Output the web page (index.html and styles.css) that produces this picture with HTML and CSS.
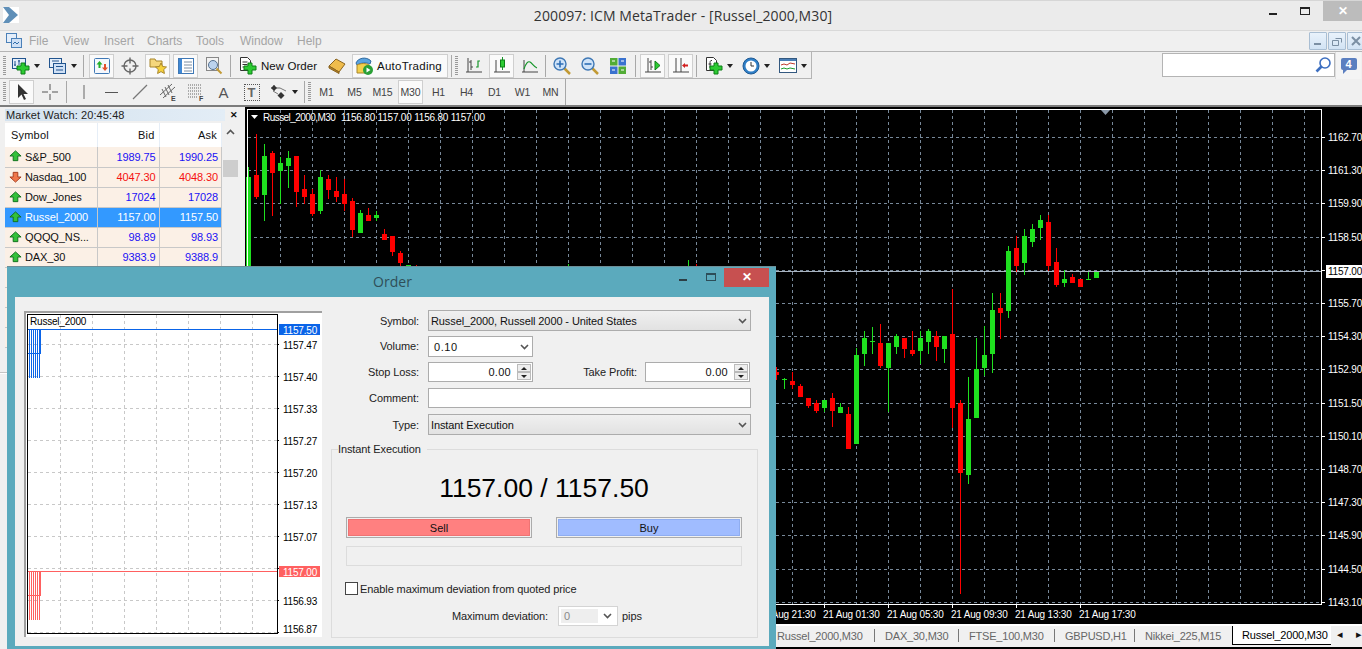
FILE: index.html
```html
<!DOCTYPE html>
<html lang="en">
<head>
	<title>200097: ICM MetaTrader - [Russel_2000,M30]</title>
	<meta charset="utf-8">
	<link rel="stylesheet" href="styles.css">
</head>

<body>
	<svg class="defs" width="0" height="0">
		<symbol id="i-plus" viewBox="0 0 18 18"><path d="M9 6h4v3h4v4h-4v4H9v-4H5V9h4z" fill="#2ccb32" stroke="#0d7f16"/></symbol>
		<symbol id="i-newchart" viewBox="0 0 18 18"><rect x=".5" y="1.5" width="13" height="10" fill="#e4eefa" stroke="#22558f"/><path d="M3 4v5M2 8h2M7 3v5M6 4h2" stroke="#22558f" fill="none"/><use href="#i-plus"/></symbol>
		<symbol id="i-profiles" viewBox="0 0 18 18"><rect x=".5" y="1.5" width="12" height="9" fill="#e4eefa" stroke="#22558f"/><rect x="4.5" y="6.5" width="12" height="10" fill="#cfe0f5" stroke="#22558f"/><path d="M3 4h7M7 9.500h7M7 13h7" stroke="#22558f"/></symbol>
		<symbol id="i-market" viewBox="0 0 18 18"><rect x="1.500" y="1.500" width="15" height="15" rx="1" fill="#f4f8fd" stroke="#3f78b5"/><path d="M6.500 4l3 3.500h-2V11h-2V7.500h-2z" fill="#22b02a"/><path d="M11 7h2v3.500h2l-3 3.500-3-3.500h2z" fill="#e2502a"/></symbol>
		<symbol id="i-cross" viewBox="0 0 18 18"><circle cx="9" cy="9" r="6" fill="none" stroke="#666" stroke-width="1.400"/><path d="M9 .5v6M9 11.500v6M.5 9h6M11.500 9h6" stroke="#666" stroke-width="1.400"/></symbol>
		<symbol id="i-navigator" viewBox="0 0 18 18"><path d="M1 2h5l1 2h6v6H1z" fill="#f5d77c" stroke="#a8862c"/><path d="M12 6l1.700 3.500 3.800.5-2.800 2.600.7 3.900-3.400-1.900-3.400 1.900.7-3.900L6.500 10l3.800-.5z" fill="#f6d23c" stroke="#a8862c"/></symbol>
		<symbol id="i-terminal" viewBox="0 0 18 18"><rect x="1.500" y="1.500" width="15" height="15" fill="#fff" stroke="#3f78b5"/><rect x="2" y="2" width="3" height="14" fill="#3f88d5"/><path d="M7 5h8M7 8h8M7 11h8M7 14h8" stroke="#7d8da0"/></symbol>
		<symbol id="i-tester" viewBox="0 0 18 18"><rect x="1.500" y=".5" width="12" height="13" fill="#f3f3f3" stroke="#888"/><circle cx="8" cy="8" r="4.500" fill="#bcd3ee" stroke="#56718f"/><path d="M11.500 11.500l5 5" stroke="#c29a35" stroke-width="2"/></symbol>
		<symbol id="i-order" viewBox="0 0 18 18"><path d="M1.500.5h7l3 3v10h-10z" fill="#fff" stroke="#333"/><path d="M3.500 5h5M3.500 7.500h5M3.500 10h3" stroke="#333"/><use href="#i-plus"/></symbol>
		<symbol id="i-editor" viewBox="0 0 18 18"><path d="M1 9l7-7 9 5-6 8z" fill="#efbc4c" stroke="#8a6420"/><path d="M1 9l10 6v1.500L1 11z" fill="#b98425" stroke="#8a6420"/></symbol>
		<symbol id="i-auto" viewBox="0 0 18 18"><path d="M1 6c2-5 10-7 15-2l-1 3c-4-2-9-1-13 1z" fill="#5aa3e0" stroke="#336b9e"/><path d="M2 8c4-2 9-2 12 0v8H2z" fill="#f3cf4c" stroke="#a8862c"/><circle cx="13" cy="13" r="5" fill="#2aa036"/><path d="M11.500 10.500l4 2.500-4 2.500z" fill="#fff"/></symbol>
		<symbol id="i-bars" viewBox="0 0 18 18"><path d="M3 1v14M1 15h16M6 3v10M4 5h2M6 10h2" stroke="#444" fill="none"/><path d="M11 10h2V4h2" stroke="#16962a" fill="none" stroke-width="1.200"/></symbol>
		<symbol id="i-candle" viewBox="0 0 18 18"><path d="M3 3v12M1 15h16" stroke="#444" fill="none"/><path d="M9.500 0v13" stroke="#16962a"/><rect x="7.500" y="3" width="4" height="7" fill="#2ccb32" stroke="#0d7f16"/></symbol>
		<symbol id="i-line" viewBox="0 0 18 18"><path d="M3 3v12M1 15h16" stroke="#444" fill="none"/><path d="M3 12c2-6 4-8 6-7s4 5 7 6" stroke="#16962a" fill="none" stroke-width="1.200"/></symbol>
		<symbol id="i-zoomin" viewBox="0 0 18 18"><path d="M11 11l6 6" stroke="#c29a35" stroke-width="2.500"/><circle cx="7" cy="7" r="6" fill="#cfe3f8" stroke="#3f78b5" stroke-width="1.400"/><path d="M7 3.500v7M3.500 7h7" stroke="#2d6eb5" stroke-width="1.600"/></symbol>
		<symbol id="i-zoomout" viewBox="0 0 18 18"><path d="M11 11l6 6" stroke="#c29a35" stroke-width="2.500"/><circle cx="7" cy="7" r="6" fill="#cfe3f8" stroke="#3f78b5" stroke-width="1.400"/><path d="M3.500 7h7" stroke="#2d6eb5" stroke-width="1.600"/></symbol>
		<symbol id="i-tile" viewBox="0 0 18 18"><rect x="1" y="1" width="7.500" height="7.500" fill="#52ac36"/><rect x="9.500" y="1" width="7.500" height="7.500" fill="#3a72cf"/><rect x="1" y="9.500" width="7.500" height="7.500" fill="#3a72cf"/><rect x="9.500" y="9.500" width="7.500" height="7.500" fill="#52ac36"/><path d="M3 4h3M12 4h3M3 13h3M12 13h3" stroke="#fff"/></symbol>
		<symbol id="i-shift" viewBox="0 0 18 18"><path d="M4 1v14M1 15h16M7 3v10M5 5h2M7 10h2" stroke="#444" fill="none"/><path d="M11 4l5 4.500-5 4.500z" fill="#2ccb32" stroke="#0d7f16"/></symbol>
		<symbol id="i-scroll" viewBox="0 0 18 18"><path d="M4 1v14M1 15h16M9 1v14" stroke="#444" fill="none"/><path d="M16 6v1.500h-3V6l-3 2.500 3 2.500V9.500h3z" fill="#d21f1f"/></symbol>
		<symbol id="i-indicator" viewBox="0 0 18 18"><path d="M1.500.5h7l3 3v10h-10z" fill="#fff" stroke="#333"/><path d="M7 3.500C5 3 5 5 5 7v4M3.500 7h3" stroke="#333" fill="none"/><use href="#i-plus"/></symbol>
		<symbol id="i-clock" viewBox="0 0 18 18"><circle cx="9" cy="9" r="8" fill="#2f7fc7" stroke="#1f5a94"/><circle cx="9" cy="9" r="5.500" fill="#fff"/><path d="M9 5v4h3" stroke="#333" fill="none"/></symbol>
		<symbol id="i-template" viewBox="0 0 18 18"><rect x=".5" y="1.500" width="17" height="14" fill="#fff" stroke="#33587f"/><rect x="1" y="2" width="16" height="2" fill="#4a7eb6"/><path d="M2 8l3-1 3 1 3-2 5 1" stroke="#c0392b" fill="none"/><path d="M2 12l3-1 3 1 3-1 5 1" stroke="#1b9a2c" fill="none"/></symbol>
		<symbol id="i-up" viewBox="0 0 14 12"><path d="M7 .5l6 5.500H9.500v5h-5V6H1z" fill="#34c13a" stroke="#0e6d1b"/></symbol>
		<symbol id="i-down" viewBox="0 0 14 12"><path d="M7 11.500L1 6h3.500V1h5v5H13z" fill="#f0764a" stroke="#a2381a"/></symbol>
		<symbol id="i-chevron" viewBox="0 0 9 6"><path d="M1 1l3.500 3.500L8 1" fill="none" stroke="#555" stroke-width="1.600"/></symbol>
	</svg>

	<div class="app">
		<div class="titlebar">
			<svg class="logo" width="16" height="16" viewBox="0 0 16 16"><rect width="16" height="16" fill="#fff"/><path d="M0 0h6l9 8-9 8H0l6-8z" fill="#5f8fb8"/></svg>
			<div class="title">200097: ICM MetaTrader - [Russel_2000,M30]</div>
			<div class="win-btns">
				<span class="win-min"></span>
				<span class="win-max"></span>
				<span class="win-close">✕</span>
			</div>
		</div>

		<div class="menubar">
			<svg class="menu-icon" width="16" height="16" viewBox="0 0 16 16"><rect x=".5" y=".5" width="10" height="9" fill="#e4eefa" stroke="#4b80b8"/><rect x="5.500" y="5.500" width="10" height="9" fill="#cfe0f5" stroke="#4b80b8"/><path d="M7 11l2-2 2 2 2-2" fill="none" stroke="#2f6ca8"/></svg>
			<span class="menu-item">File</span>
			<span class="menu-item">View</span>
			<span class="menu-item">Insert</span>
			<span class="menu-item">Charts</span>
			<span class="menu-item">Tools</span>
			<span class="menu-item">Window</span>
			<span class="menu-item">Help</span>
			<div class="mdi-btns">
				<span class="mdi-btn"><svg width="10" height="10"><path d="M1 8h7" stroke="#7b8fa3" stroke-width="2"/></svg></span>
				<span class="mdi-btn"><svg width="10" height="10"><path d="M3.500 2.500h6v4M.5 4.500h6v5h-6z" fill="none" stroke="#7b8fa3"/></svg></span>
				<span class="mdi-btn"><svg width="10" height="10"><path d="M1 1l8 8M9 1L1 9" stroke="#7b8fa3" stroke-width="2"/></svg></span>
			</div>
		</div>

		<div class="toolrow">
			<div class="toolbar toolbar-main">
				<span class="grip"></span>
				<span class="drop"><svg class="ico"><use href="#i-newchart"/></svg><i class="caret"></i></span>
				<span class="drop"><svg class="ico"><use href="#i-profiles"/></svg><i class="caret"></i></span>
				<span class="sep sep-a"></span>
				<span class="tool on"><svg class="ico"><use href="#i-market"/></svg></span>
				<span class="tool"><svg class="ico"><use href="#i-cross"/></svg></span>
				<span class="tool on"><svg class="ico"><use href="#i-navigator"/></svg></span>
				<span class="tool on"><svg class="ico"><use href="#i-terminal"/></svg></span>
				<span class="tool"><svg class="ico"><use href="#i-tester"/></svg></span>
				<span class="sep sep-b"></span>
				<span class="tool-text new-order"><svg class="ico"><use href="#i-order"/></svg>New Order</span>
				<span class="tool"><svg class="ico"><use href="#i-editor"/></svg></span>
				<span class="tool-text auto on"><svg class="ico"><use href="#i-auto"/></svg>AutoTrading</span>
				<span class="sep sep-c"></span>
				<span class="grip"></span>
				<span class="tool"><svg class="ico"><use href="#i-bars"/></svg></span>
				<span class="tool on"><svg class="ico"><use href="#i-candle"/></svg></span>
				<span class="tool"><svg class="ico"><use href="#i-line"/></svg></span>
				<span class="sep sep-c"></span>
				<span class="tool"><svg class="ico"><use href="#i-zoomin"/></svg></span>
				<span class="tool"><svg class="ico"><use href="#i-zoomout"/></svg></span>
				<span class="tool"><svg class="ico"><use href="#i-tile"/></svg></span>
				<span class="sep sep-d"></span>
				<span class="tool on"><svg class="ico"><use href="#i-shift"/></svg></span>
				<span class="tool on"><svg class="ico"><use href="#i-scroll"/></svg></span>
				<span class="sep sep-a"></span>
				<span class="drop"><svg class="ico"><use href="#i-indicator"/></svg><i class="caret"></i></span>
				<span class="drop"><svg class="ico"><use href="#i-clock"/></svg><i class="caret"></i></span>
				<span class="drop"><svg class="ico"><use href="#i-template"/></svg><i class="caret"></i></span>
			</div>
			<div class="search">
				<svg width="18" height="18" viewBox="0 0 18 18"><circle cx="11" cy="7" r="5" fill="#fff" stroke="#3d6fc0" stroke-width="1.600"/><path d="M7.500 10.500L2.500 15.500" stroke="#3d6fc0" stroke-width="2.600"/></svg>
			</div>
			<div class="notify">
				<span class="notify-bubble">4</span>
			</div>
		</div>

		<div class="toolbar toolbar-draw">
			<span class="grip"></span>
			<span class="tool on"><svg class="ico" viewBox="0 0 18 18"><path d="M5 1v14l3.500-3.500 2.500 5.500 2-1-2.500-5H15z" fill="#333"/></svg></span>
			<span class="tool"><svg class="ico" viewBox="0 0 18 18"><path d="M9 1v6M9 11v6M1 9h6M11 9h6" stroke="#555"/></svg></span>
			<span class="sep sep-e"></span>
			<span class="tool"><svg class="ico" viewBox="0 0 18 18"><path d="M9 2v14" stroke="#666"/></svg></span>
			<span class="tool"><svg class="ico" viewBox="0 0 18 18"><path d="M2 9.500h13" stroke="#555"/></svg></span>
			<span class="tool"><svg class="ico" viewBox="0 0 18 18"><path d="M2 16L16 2" stroke="#777" stroke-width="1.200"/></svg></span>
			<span class="tool"><svg class="ico" viewBox="0 0 18 18"><path d="M1 12L13 1M4 15L16 4M3 6l4 8M6 4l4 8M9 2l4 8" stroke="#666" fill="none"/><text x="12" y="18" class="ico-letter">E</text></svg></span>
			<span class="tool"><svg class="ico" viewBox="0 0 18 18"><path d="M1 2h13M1 5h13M1 8h13M1 11h13M1 14h10" stroke="#666" stroke-dasharray="1 1"/><text x="12" y="18" class="ico-letter">F</text></svg></span>
			<span class="tool tool-a">A</span>
			<span class="tool tool-t">T</span>
			<span class="drop drop-draw"><svg class="ico" viewBox="0 0 18 18"><path d="M1 5h9M4 2v6" stroke="#666"/><path d="M4 2l3 3-3 3-3-3z" fill="#333"/><path d="M11 9l3.500 3.500L11 16l-3.500-3.500z" fill="#333"/><path d="M3 8l5 3M10 5l6 3" stroke="#777"/></svg><i class="caret"></i></span>
			<span class="sep sep-f"></span>
			<span class="grip"></span>
			<span class="tool period">M1</span>
			<span class="tool period">M5</span>
			<span class="tool period">M15</span>
			<span class="tool period on">M30</span>
			<span class="tool period">H1</span>
			<span class="tool period">H4</span>
			<span class="tool period">D1</span>
			<span class="tool period">W1</span>
			<span class="tool period">MN</span>
			<span class="sep sep-g"></span>
		</div>

		<div class="workspace">
			<div class="side">
				<div class="watch">
					<div class="panel-head">
						<span class="panel-title">Market Watch: 20:45:48</span>
						<span class="panel-close">✕</span>
					</div>
					<div class="watch-body">
						<table class="quotes">
							<thead>
								<tr><th class="sym">Symbol</th><th>Bid</th><th>Ask</th></tr>
							</thead>
							<tbody>
								<tr><td class="sym"><svg class="arrow"><use href="#i-up"/></svg>S&amp;P_500</td><td class="b">1989.75</td><td class="b">1990.25</td></tr>
								<tr><td class="sym"><svg class="arrow"><use href="#i-down"/></svg>Nasdaq_100</td><td class="r">4047.30</td><td class="r">4048.30</td></tr>
								<tr><td class="sym"><svg class="arrow"><use href="#i-up"/></svg>Dow_Jones</td><td class="b">17024</td><td class="b">17028</td></tr>
								<tr class="sel"><td class="sym"><svg class="arrow"><use href="#i-up"/></svg>Russel_2000</td><td>1157.00</td><td>1157.50</td></tr>
								<tr><td class="sym"><svg class="arrow"><use href="#i-up"/></svg>QQQQ_NS...</td><td class="b">98.89</td><td class="b">98.93</td></tr>
								<tr><td class="sym"><svg class="arrow"><use href="#i-up"/></svg>DAX_30</td><td class="b">9383.9</td><td class="b">9388.9</td></tr>
								<tr><td class="sym"></td><td></td><td></td></tr>
								<tr><td class="sym"></td><td></td><td></td></tr>
								<tr><td class="sym"></td><td></td><td></td></tr>
								<tr><td class="sym"></td><td></td><td></td></tr>
							</tbody>
						</table>
						<div class="scroll">
							<svg width="9" height="6"><use href="#i-chevron" transform="rotate(180 4.500 3)"/></svg>
							<span class="scroll-thumb"></span>
						</div>
					</div>
				</div>
				<div class="navigator"></div>
			</div>

			<div class="chart-wrap">
				<svg id="chart" class="chart" width="1117" height="517" viewBox="245 107 1117 517"></svg>
				<div class="tabs">
					<span class="tab tab-first">Russel_2000,M30</span>
					<span class="tab">DAX_30,M30</span>
					<span class="tab">FTSE_100,M30</span>
					<span class="tab">GBPUSD,H1</span>
					<span class="tab tab-last">Nikkei_225,M15</span>
					<span class="tab active">Russel_2000,M30</span>
					<span class="tab-arrows"><i>◂</i><i>▸</i></span>
				</div>
			</div>
		</div>
	</div>

	<div class="dialog">
		<div class="dialog-head">
			<span></span>
			<span class="dialog-title">Order</span>
			<div class="dialog-btns">
				<span class="dlg-min"></span>
				<span class="dlg-max"></span>
				<span class="dlg-close">✕</span>
			</div>
		</div>
		<div class="dialog-body">
			<svg id="tick" class="tick" width="298" height="326" viewBox="24 311 298 326"></svg>
			<div class="order">
				<div class="row row-symbol">
					<label>Symbol:</label>
					<div class="combo wide">Russel_2000, Russell 2000 - United States<svg class="chev"><use href="#i-chevron"/></svg></div>
				</div>
				<div class="row row-volume">
					<label>Volume:</label>
					<div class="combo white short">0.10<svg class="chev"><use href="#i-chevron"/></svg></div>
				</div>
				<div class="row row-stops">
					<label>Stop Loss:</label>
					<div class="spin short"><span class="spin-val">0.00</span><span class="spin-btns"><i class="up"></i><i class="dn"></i></span></div>
					<label class="label-tp">Take Profit:</label>
					<div class="spin short"><span class="spin-val">0.00</span><span class="spin-btns"><i class="up"></i><i class="dn"></i></span></div>
				</div>
				<div class="row row-comment">
					<label>Comment:</label>
					<div class="field wide"></div>
				</div>
				<div class="row row-type">
					<label>Type:</label>
					<div class="combo wide">Instant Execution<svg class="chev"><use href="#i-chevron"/></svg></div>
				</div>
				<fieldset class="exec">
					<legend>Instant Execution</legend>
					<div class="price">1157.00 / 1157.50</div>
					<div class="deal">
						<button class="deal-btn sell">Sell</button>
						<button class="deal-btn buy">Buy</button>
					</div>
					<div class="progress"></div>
					<div class="check"><span class="check-box"></span>Enable maximum deviation from quoted price</div>
					<div class="deviation">
						<span>Maximum deviation:</span>
						<div class="dev-combo"><span class="dev-val">0</span><svg class="chev"><use href="#i-chevron"/></svg></div>
						<span>pips</span>
					</div>
				</fieldset>
			</div>
		</div>
	</div>

	<script src="chart.js"></script>
</body>

</html>
```

FILE: styles.css
```css
* {
	box-sizing: border-box;
}

html, body {
	margin: 0;
	padding: 0;
	height: 649px;
	overflow: hidden;
}

body {
	position: relative;
	background: #f0f0f0;
	color: #111;
	font-family: "Liberation Sans", Arial, sans-serif;
	font-size: 11px;
	letter-spacing: -.1px;
}

.defs {
	position: absolute;
}

.app {
	display: flex;
	flex-direction: column;
	height: 649px;
}

/* window title */
.titlebar {
	display: grid;
	grid-template-columns: 1fr auto 1fr;
	align-items: center;
	height: 31px;
	flex: none;
	background: #ebebeb;
	border-top: 1px solid #d6d6d6;
	border-bottom: 1px solid #d9d9d9;
}

.logo {
	margin: -2px 0 0 3px;
}

.title {
	font-family: "Open Sans", sans-serif;
	font-size: 14px;
	color: #333;
	letter-spacing: .1px;
	margin: -1px 0 0 4px;
}

.win-btns {
	display: flex;
	justify-content: flex-end;
	align-self: start;
	align-items: flex-start;
}

.win-min {
	width: 8px;
	height: 2px;
	margin: 12px 23px 0 0;
	background: #222;
}

.win-max {
	width: 10px;
	height: 8px;
	margin: 6px 13px 0 0;
	border: 1px solid #222;
	border-top-width: 2px;
}

.win-close {
	width: 39px;
	height: 20px;
	background: #bcbcbc;
	color: #fff;
	font-size: 12px;
	font-weight: bold;
	line-height: 20px;
	text-align: center;
}

/* menu */
.menubar {
	display: flex;
	align-items: center;
	height: 21px;
	flex: none;
	padding-left: 6px;
	background: #f0f0f0;
	border-bottom: 1px solid #b4b4b4;
	color: #a5a5a5;
	font-size: 12px;
	letter-spacing: 0;
}

.menu-icon {
	margin-right: 7px;
}

.menu-item {
	margin-right: 20px;
}

.menu-item:nth-of-type(1) { width: 14px; }
.menu-item:nth-of-type(2) { width: 21px; }
.menu-item:nth-of-type(3) { width: 23px; }
.menu-item:nth-of-type(4) { width: 29px; }
.menu-item:nth-of-type(5) { width: 24px; }
.menu-item:nth-of-type(6) { width: 37px; }

.mdi-btns {
	display: flex;
	gap: 1px;
	margin-left: auto;
	align-self: flex-start;
	margin-top: 1px;
	margin-right: -3px;
}

.mdi-btn {
	display: flex;
	align-items: center;
	justify-content: center;
	width: 18px;
	height: 18px;
	background: linear-gradient(#e9f2fb, #d2e3f4);
	border: 1px solid #a9bed3;
	border-radius: 1px;
}

/* toolbars */
.toolrow {
	display: flex;
	height: 27px;
	flex: none;
}

.toolbar {
	display: flex;
	align-items: center;
	gap: 3px;
	padding-left: 3px;
}

.toolbar-main {
	width: 812px;
	padding-top: 2px;
	border-right: 1px solid #b4b4b4;
	border-bottom: 1px solid #b4b4b4;
}

.toolbar-draw {
	height: 26px;
	flex: none;
}

.grip {
	width: 3px;
	height: 20px;
	background: repeating-linear-gradient(#9a9a9a 0 1px, #f0f0f0 1px 2px);
}

.sep {
	width: 1px;
	height: 22px;
	background: #a8a8a8;
}

.sep-a { margin-right: 2px; }
.sep-b { margin: 0 1px 0 1px; }
.sep-c { margin-left: 0; }
.sep-d { margin: 0 1px 0 2px; }
.sep-e { margin: 0 1px; }
.sep-g { margin-left: -1px; height: 26px; }

.tool {
	display: flex;
	align-items: center;
	justify-content: center;
	width: 25px;
	height: 24px;
	color: #555;
}

.tool-text {
	display: flex;
	align-items: center;
	gap: 4px;
	height: 24px;
	color: #111;
	font-size: 11.500px;
	letter-spacing: .25px;
	white-space: nowrap;
}

.on {
	background: #fafafa;
	border: 1px solid #cfcfcf;
}

.new-order {
	width: 86px;
	padding-left: 4px;
	letter-spacing: .05px;
}

.auto {
	width: 96px;
	padding-left: 2px;
}

.ico {
	width: 18px;
	height: 18px;
	flex: none;
}

.ico-letter {
	font-size: 7px;
	font-weight: bold;
	fill: #444;
}

.drop {
	display: flex;
	align-items: center;
	gap: 4px;
	width: 34px;
	height: 24px;
	padding-left: 3px;
}

.caret {
	width: 0;
	height: 0;
	border: 3.500px solid transparent;
	border-top: 4px solid #222;
	border-bottom: 0;
}

.tool-a {
	font-size: 15px;
	color: #555;
}

.tool-t {
	font-size: 13px;
	font-weight: bold;
	color: #666;
}

.tool-t::before {
	content: "";
	position: absolute;
	width: 14px;
	height: 15px;
	border: 1px dotted #555;
}

.period {
	font-size: 10.500px;
	color: #444;
}

.search {
	display: flex;
	align-items: center;
	justify-content: flex-end;
	width: 173px;
	height: 24px;
	margin: 1px 0 0 350px;
	padding-right: 2px;
	background: #fff;
	border: 1px solid #b4b4b4;
}

.notify {
	display: flex;
	align-items: flex-start;
	justify-content: center;
	width: 26px;
	padding-top: 6px;
	background: #f4f4f4;
	border-left: 1px solid #ddd;
}

.notify-bubble {
	position: relative;
	width: 16px;
	height: 12px;
	background: #5b7fc0;
	border-radius: 2px;
	color: #fff;
	font-size: 11px;
	font-weight: bold;
	line-height: 12px;
	text-align: center;
}

.notify-bubble::after {
	content: "";
	position: absolute;
	left: 2px;
	top: 12px;
	border-top: 4px solid #5b7fc0;
	border-right: 4px solid transparent;
}

/* main area */
.workspace {
	display: flex;
	flex: 1;
	min-height: 0;
	border-top: 2px solid #7c7c7c;
}

.side {
	width: 245px;
	flex: none;
	background: #f0f0f0;
}

.watch {
	height: 266px;
	padding: 2px 0 0 5px;
	border-bottom: 1px solid #c4c4c4;
	overflow: hidden;
}

.panel-head {
	display: flex;
	align-items: center;
	height: 12px;
	margin-bottom: 2px;
}

.panel-title {
	flex: none;
	width: 220px;
	height: 12px;
	padding-left: 1px;
	background: linear-gradient(90deg, #d3e2ef, #e3edf6);
	color: #222;
	line-height: 12px;
	letter-spacing: .1px;
}

.panel-close {
	width: 18px;
	text-align: center;
	font-size: 9px;
	font-weight: bold;
}

.watch-body {
	display: flex;
}

.quotes {
	width: 217px;
	flex: none;
	table-layout: fixed;
	border-collapse: collapse;
}

.quotes th {
	height: 24px;
	padding: 0 4px 0 0;
	background: #fff;
	border-right: 1px solid #e6eef7;
	font-weight: normal;
	text-align: right;
	letter-spacing: .2px;
}

.quotes th.sym {
	width: 92px;
	padding-left: 6px;
	text-align: left;
}

.quotes th:nth-child(2) {
	width: 62px;
}

.quotes td {
	height: 20px;
	padding: 0 3px 0 0;
	background: #fbf0e6;
	border-right: 1px solid #c8c8c8;
	border-bottom: 1px solid #c8c8c8;
	text-align: right;
	white-space: nowrap;
	overflow: hidden;
}

.quotes td.sym {
	padding: 0 0 0 20px;
	text-align: left;
	position: relative;
}

.arrow {
	position: absolute;
	left: 4px;
	top: 3px;
	width: 13px;
	height: 12px;
}

.b {
	color: #1a10f5;
}

.r {
	color: #f51010;
}

.quotes tr.sel td {
	background: #3399ff;
	color: #fff;
}

.scroll {
	display: flex;
	flex-direction: column;
	align-items: center;
	width: 15px;
	margin-left: 1px;
	padding-top: 6px;
}

.scroll-thumb {
	width: 15px;
	height: 17px;
	margin-top: 25px;
	background: #cdcdcd;
}

.navigator {
	height: 276px;
	background: #f0f0f0;
	border-top: 1px solid #fff;
}

.chart-wrap {
	flex: 1;
	display: flex;
	flex-direction: column;
	background: #000;
}

.chart {
	display: block;
	flex: none;
}

.chart text {
	font-family: "Liberation Sans", Arial, sans-serif;
	font-size: 10px;
	letter-spacing: -.2px;
	fill: #fff;
}

.chart .price-tag {
	fill: #000;
}

.chart .chart-symbol {
	letter-spacing: -.55px;
}

.tabs {
	display: grid;
	grid-template-columns: 1fr 84px 96px 80px 97px 99px 31px;
	height: 23px;
	background: #f0f0f0;
	border-top: 2px solid #fff;
	color: #666;
	letter-spacing: -.2px;
}

.tab {
	padding: 4px 0 0 10px;
	white-space: nowrap;
	position: relative;
}

.tab-first {
	padding-left: 532px;
}

.tab:not(.active):not(.tab-last)::after {
	content: "";
	position: absolute;
	right: 0;
	top: 3px;
	width: 1px;
	height: 13px;
	background: #777;
}

.tab.active {
	height: 19px;
	background: #fff;
	border: 1px solid #000;
	border-top: 0;
	border-right: 0;
	color: #000;
	padding: 3px 0 0 9px;
}

.tab-arrows {
	display: flex;
	justify-content: space-between;
	padding: 2px 0 0 6px;
	color: #111;
	font-size: 11px;
}

.tab-arrows i {
	font-style: normal;
}

/* order dialog */
.dialog {
	position: absolute;
	left: 7px;
	top: 266px;
	width: 769px;
	height: 383px;
	padding: 0 7px 3px 8px;
	background: #5baabd;
	border-top: 1px solid #6e8f98;
	display: flex;
	flex-direction: column;
}

.dialog-head {
	display: grid;
	grid-template-columns: 1fr auto 1fr;
	height: 30px;
	flex: none;
	margin-right: -7px;
}

.dialog-title {
	font-family: "Open Sans", sans-serif;
	font-size: 14px;
	letter-spacing: 0;
	color: #2f4f58;
	margin: 5px 6px 0 0;
}

.dialog-btns {
	display: flex;
	justify-content: flex-end;
	align-items: flex-start;
	padding-right: 7px;
}

.dlg-min {
	width: 8px;
	height: 2px;
	margin: 12px 19px 0 0;
	background: #2c3f45;
}

.dlg-max {
	width: 10px;
	height: 8px;
	margin: 6px 8px 0 0;
	border: 1px solid #2c4d58;
	border-top-width: 2px;
}

.dlg-close {
	width: 45px;
	height: 19px;
	margin-top: 1px;
	background: #c75050;
	color: #fff;
	font-size: 12px;
	font-weight: bold;
	line-height: 19px;
	text-align: center;
}

.dialog-body {
	display: flex;
	flex: 1;
	gap: 9px;
	padding: 13px 11px 0 9px;
	background: #f0f0f0;
	min-height: 0;
}

.tick {
	flex: none;
	display: block;
	margin-top: 1px;
}

.tick text {
	font-family: "Liberation Sans", Arial, sans-serif;
	font-size: 10px;
	letter-spacing: -.2px;
	fill: #000;
}

.order {
	flex: 1;
	display: flex;
	flex-direction: column;
	min-width: 0;
}

.row {
	display: flex;
	align-items: center;
	gap: 9px;
	flex: none;
}

.row label {
	width: 88px;
	flex: none;
	text-align: right;
	color: #222;
}

.row-symbol { height: 21px; margin-bottom: 5px; }
.row-volume { height: 21px; margin-bottom: 5px; }
.row-stops { height: 20px; margin-bottom: 6px; }
.row-comment { height: 20px; margin-bottom: 6px; }
.row-type { height: 21px; margin-bottom: 8px; }

.row-volume label {
	margin-top: -2px;
}

.row .label-tp {
	width: 95px;
	margin-right: -1px;
}

.wide {
	width: 323px;
	height: 100%;
}

.short {
	width: 105px;
	height: 100%;
}

.combo {
	display: flex;
	align-items: center;
	justify-content: space-between;
	padding: 0 3px 0 2px;
	background: linear-gradient(#f0f0f0, #e2e2e2);
	border: 1px solid #acacac;
	color: #111;
}

.combo.white {
	padding-left: 5px;
	background: #fff;
	letter-spacing: .6px;
}

.chev {
	width: 9px;
	height: 6px;
	flex: none;
}

.field {
	background: #fff;
	border: 1px solid #acacac;
}

.spin {
	display: flex;
	align-items: center;
	background: #fff;
	border: 1px solid #acacac;
}

.spin-val {
	flex: 1;
	text-align: right;
	padding-right: 5px;
	letter-spacing: .3px;
}

.spin-btns {
	display: flex;
	flex-direction: column;
	width: 16px;
	height: 100%;
	padding: 1px;
	flex: none;
}

.spin-btns i {
	flex: 1;
	background: #eee;
	border: 1px solid #bbb;
	position: relative;
}

.spin-btns .up::after,
.spin-btns .dn::after {
	content: "";
	position: absolute;
	left: 3px;
	top: 2px;
	border: 3px solid transparent;
}

.spin-btns .up::after {
	top: -1px;
	border-bottom: 3px solid #222;
}

.spin-btns .dn::after {
	border-top: 3px solid #222;
}

.exec {
	flex: none;
	height: 195px;
	margin: 0;
	padding: 0 15px 0 14px;
	border: 1px solid #dcdcdc;
	min-width: 0;
}

.exec legend {
	margin-left: -8px;
	padding: 0 6px 0 0;
	color: #222;
	font-size: 11px;
	line-height: 13px;
}

.price {
	height: 32px;
	margin-top: 16px;
	color: #000;
	font-size: 26.500px;
	line-height: 32px;
	letter-spacing: 0;
	text-align: center;
}

.deal {
	display: flex;
	justify-content: space-between;
	margin-top: 13px;
}

.deal-btn {
	width: 186px;
	height: 21px;
	padding: 0;
	border: 1px solid #ababab;
	font-family: inherit;
	font-size: 11px;
	color: #111;
}

.sell {
	background: #ff8080;
	box-shadow: inset 0 0 0 1px #f0f0f0, inset 0 0 0 2px #ee7373;
}

.buy {
	background: #a0bcff;
	box-shadow: inset 0 0 0 1px #f0f0f0, inset 0 0 0 2px #8fadf0;
}

.progress {
	height: 20px;
	margin-top: 8px;
	border: 1px solid #dcdcdc;
}

.check {
	display: flex;
	align-items: center;
	gap: 2px;
	height: 13px;
	margin: 16px 0 0 -1px;
	color: #222;
	white-space: nowrap;
}

.check-box {
	width: 13px;
	height: 13px;
	background: #fff;
	border: 1px solid #444;
}

.deviation {
	display: flex;
	align-items: center;
	gap: 10px;
	height: 20px;
	margin: 11px 0 0 106px;
	color: #222;
}

.deviation span:last-child {
	margin-left: -6px;
}

.dev-combo {
	display: flex;
	align-items: center;
	justify-content: space-between;
	width: 60px;
	height: 20px;
	padding: 2px 5px 2px 2px;
	background: #fff;
	border: 1px solid #d4d4d4;
}

.dev-val {
	width: 37px;
	height: 100%;
	padding-left: 3px;
	background: #eee;
	color: #888;
	line-height: 14px;
}
```

FILE: chart.js
```js
// [centre x, high, low, body top, body bottom, colour]
const candles = [
	[248.5, 167, 280, 177, 280, 'g'], [256.5, 134, 199, 175, 197, 'r'], [264.5, 144, 221, 156, 195, 'g'],
	[272.5, 151, 216, 153, 173, 'r'], [280.5, 157, 204, 163, 171, 'g'], [288.5, 151, 188, 158, 166, 'g'],
	[296.5, 156, 207, 156, 192, 'r'], [304.5, 175, 204, 189, 197, 'r'], [312.5, 189, 216, 194, 214, 'r'],
	[320.5, 170, 214, 177, 211, 'g'], [328.5, 175, 199, 179, 190, 'r'], [336.5, 177, 202, 191, 197, 'r'],
	[344.5, 179, 211, 194, 204, 'r'], [352.5, 198, 237, 201, 230, 'r'], [360.5, 210, 233, 213, 233, 'g'],
	[368.5, 208, 221, 215, 221, 'r'], [376.5, 211, 221, 215, 218, 'g'], [384.5, 229, 240, 234, 240, 'r'],
	[392.5, 236, 256, 236, 252, 'r'], [400.5, 251, 270, 253, 263, 'r'], [408.5, 265, 275, 265, 275, 'g'],
	[416.5, 265, 275, 268, 275, 'r'], [568.5, 264, 280, 270, 275, 'g'], [688.5, 260, 280, 272, 280, 'g'],
	[696.5, 264, 280, 270, 280, 'r'],
	[776.5, 367, 380, 372, 375, 'r'], [784.5, 378, 389, 379, 380, 'g'], [792.5, 372, 389, 381, 385, 'r'],
	[800.5, 384, 397, 386, 397, 'r'], [808.5, 398, 408, 398, 406, 'r'], [816.5, 400, 413, 403, 411, 'r'],
	[824.5, 400, 412, 400, 408, 'g'], [832.5, 393, 427, 398, 411, 'r'], [840.5, 403, 413, 407, 413, 'g'],
	[848.5, 407, 449, 414, 449, 'r'], [856.5, 348, 444, 355, 444, 'g'], [864.5, 331, 366, 338, 354, 'g'],
	[872.5, 327, 354, 341, 342, 'g'], [880.5, 324, 368, 343, 366, 'r'], [888.5, 343, 412, 343, 368, 'g'],
	[896.5, 334, 354, 336, 347, 'g'], [904.5, 338, 358, 338, 349, 'r'], [912.5, 331, 356, 350, 354, 'r'],
	[920.5, 331, 364, 338, 351, 'g'], [928.5, 329, 354, 331, 342, 'g'], [936.5, 331, 361, 336, 347, 'r'],
	[944.5, 336, 363, 336, 349, 'g'], [952.5, 289, 428, 334, 408, 'r'], [960.5, 400, 594, 403, 473, 'r'],
	[968.5, 377, 484, 419, 475, 'g'], [976.5, 338, 418, 369, 418, 'g'], [984.5, 326, 376, 355, 368, 'g'],
	[992.5, 293, 373, 310, 354, 'g'], [1000.5, 293, 339, 308, 313, 'r'], [1008.5, 246, 318, 251, 311, 'g'],
	[1016.5, 236, 272, 248, 266, 'r'], [1024.5, 229, 275, 236, 263, 'g'], [1032.5, 224, 247, 229, 242, 'g'],
	[1040.5, 215, 240, 220, 228, 'g'], [1048.5, 215, 271, 222, 266, 'r'], [1056.5, 248, 287, 262, 285, 'r'],
	[1064.5, 270, 287, 279, 283, 'g'], [1072.5, 274, 283, 277, 283, 'r'], [1080.5, 279, 287, 279, 287, 'r'],
	[1088.5, 272, 280, 279, 280, 'g'], [1096.5, 272, 278, 272, 278, 'g']
]

const colours = { g: '#1fe01f', r: '#ff0000' }
const levels = ['1162.70', '1161.30', '1159.90', '1158.50', '', '1155.70', '1154.30', '1152.90',
	'1151.50', '1150.10', '1148.70', '1147.30', '1145.90', '1144.50', '1143.10']
const dates = ['20 Aug 21:30', '21 Aug 01:30', '21 Aug 05:30', '21 Aug 09:30', '21 Aug 13:30', '21 Aug 17:30']

let out = ''
const line = (x1, y1, x2, y2, stroke, dash) =>
	`<line x1="${x1}" y1="${y1}" x2="${x2}" y2="${y2}" stroke="${stroke}"${dash ? ' stroke-dasharray="3 3"' : ''}/>`

for (let x = 280.5; x < 1322; x += 32) out += line(x, 110, x, 605, '#778899', true)
levels.forEach((label, i) => {
	const y = Math.round(137 + i * 33.2) + 0.5
	out += line(248, y, 1322, y, '#778899', true)
	out += line(1322, y, 1325, y, '#fff')
	if (label) out += `<text x="1328" y="${y + 3.5}">${label}</text>`
})
out += line(248, 271.5, 1322, 271.5, '#a9b4c0')

candles.forEach(([x, high, low, top, bottom, c]) => {
	out += line(x, high, x, low, colours[c])
	out += `<rect x="${x - 2.5}" y="${top}" width="5" height="${Math.max(bottom - top, 1)}" fill="${colours[c]}"/>`
})

out += `<rect x="247.500" y="109.500" width="1074" height="495" fill="none" stroke="#fff"/>`
out += `<rect x="1326" y="265" width="36" height="13" fill="#fff"/>`
out += `<text class="price-tag" x="1328" y="275">1157.00</text>`
out += `<path d="M251 115h7l-3.500 4z" fill="#fff"/><path d="M1101 110h9l-4.500 5z" fill="#8a98a8"/>`
out += `<text class="chart-symbol" x="263" y="121">Russel_2000,M30</text>`
out += `<text x="341" y="121">1156.80 1157.00 1156.80 1157.00</text>`
dates.forEach((label, i) => {
	const x = 760 + i * 64
	out += line(x + 0.5, 605, x + 0.5, 608, '#fff')
	out += `<text x="${x - 1}" y="618">${label}</text>`
})
document.getElementById('chart').innerHTML = out

// tick chart in the order window
let tick = '<rect x="24" y="311" width="298" height="326" fill="#fff"/>'
tick += '<path d="M25 637V312h297" fill="none" stroke="#a0a0a0" stroke-width="2"/>'
for (let x = 60.5; x < 277; x += 32) tick += line(x, 315, x, 633, '#c8c8c8', true)
const rows = [
	[344, '1157.47'], [376, '1157.40'], [408, '1157.33'], [440, '1157.27'], [472, '1157.20'],
	[504, '1157.13'], [536, '1157.07'], [568, ''], [600, '1156.93'], [632, '']
]
rows.forEach(([y, label]) => {
	tick += line(28, y + 0.5, 277, y + 0.5, '#c8c8c8', true)
	tick += line(277, y + 0.5, 279, y + 0.5, '#000')
	if (label) tick += `<text x="283" y="${y + 4.5}">${label}</text>`
})
tick += `<text x="283" y="633">1156.87</text>`

const stripes = (y, colour) => {
	let s = line(28, y + 0.5, 277, y + 0.5, colour)
	for (let x = 29.5; x < 41; x += 2) s += line(x, y, x, y + 49, colour)
	s += line(40.5, y, 40.5, y + 24, colour) + line(28, y + 24.5, 41, y + 24.5, colour)
	return s
}
tick += stripes(329, '#0a64e8') + stripes(571, '#ff6060')
tick += '<rect x="27.500" y="314.500" width="250" height="319" fill="none" stroke="#000"/>'
tick += '<text x="30" y="325">Russel_2000</text>'
tick += '<rect x="279" y="324" width="41" height="11" fill="#0a64e8"/><text x="283" y="333.500" style="fill:#fff">1157.50</text>'
tick += '<rect x="279" y="566" width="41" height="11" fill="#ff6060"/><text x="283" y="575.500" style="fill:#fff">1157.00</text>'
document.getElementById('tick').innerHTML = tick
```
